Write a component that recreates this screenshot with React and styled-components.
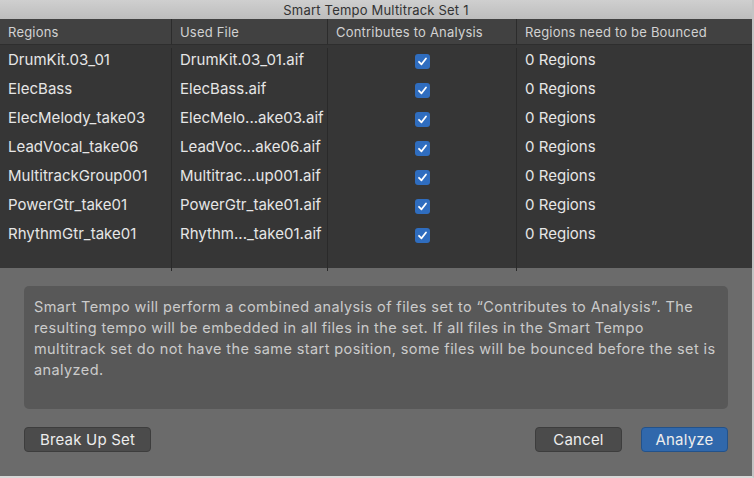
import React from 'react';
import styled, { createGlobalStyle } from 'styled-components';

const GlobalStyle = createGlobalStyle`
  html, body {
    margin: 0;
    padding: 0;
    background: #6b6b6b;
  }
  * {
    box-sizing: border-box;
  }
`;

const Window = styled.div`
  width: 754px;
  height: 478px;
  display: flex;
  flex-direction: column;
  font-family: Inter, "Noto Sans", sans-serif;
  background: #6b6b6b;
  border-right: 2px solid #c4c4c4;
  border-bottom: 2px solid #d8d8d8;
  overflow: hidden;
`;

const TitleBar = styled.div`
  height: 19px;
  flex: none;
  display: flex;
  align-items: center;
  justify-content: center;
  background: linear-gradient(#cfcfcf, #bdbdbd);
  color: #333;
  font-size: 13px;
  letter-spacing: 0.2px;
`;

const Table = styled.div`
  display: grid;
  grid-template-columns: 171px 156px 189px 1fr;
  grid-auto-rows: 29px;
  background: #363636;
  height: 249px;
  flex: none;
  align-content: start;
`;

const HeadCell = styled.div`
  height: 26px;
  display: flex;
  align-items: center;
  padding-left: 8px;
  background: #414141;
  color: #d2d2d2;
  font-size: 13px;
  letter-spacing: 0.2px;
  border-bottom: 1px solid #2e2e2e;
  border-left: ${p => (p.$first ? 'none' : '1px solid #2c2c2c')};
`;

const Cell = styled.div`
  display: flex;
  align-items: center;
  padding-left: 8px;
  color: #e6e6e6;
  font-size: 15px;
  letter-spacing: 0.02px;
  white-space: nowrap;
  border-left: ${p => (p.$first ? 'none' : '1px solid #2a2a2a')};
  justify-content: ${p => (p.$center ? 'center' : 'flex-start')};
  padding-left: ${p => (p.$center ? '0' : '8px')};
  padding-bottom: 6px;
`;

const Filler = styled.div`
  height: 20px;
  border-left: ${p => (p.$first ? 'none' : '1px solid #2a2a2a')};
`;

const Box = styled.span`
  width: 15px;
  height: 15px;
  border-radius: 3px;
  background: #2f6dbf;
  display: inline-flex;
  align-items: center;
  justify-content: center;
  margin-top: 3px;
`;

const Panel = styled.div`
  flex: 1;
  padding: 18px 24px 0 24px;
  display: flex;
  flex-direction: column;
`;

const Message = styled.div`
  height: 123px;
  background: #585858;
  border-radius: 5px;
  padding: 10px 10px;
  color: #cbcbcb;
  font-size: 14.5px;
  letter-spacing: 0.4px;
  line-height: 21px;
`;

const Line = styled.span`
  display: block;
  white-space: nowrap;
`;

const Buttons = styled.div`
  display: flex;
  align-items: center;
  gap: 19px;
  margin-top: 18px;
`;

const Spacer = styled.div`
  flex: 1;
`;

const Button = styled.button`
  height: 25px;
  width: ${p => p.$w}px;
  border-radius: 4px;
  border: 1px solid ${p => (p.$primary ? '#23528a' : '#3d3d3d')};
  background: ${p => (p.$primary ? '#3068ac' : '#4b4b4b')};
  color: #ededed;
  font-family: inherit;
  font-size: 15px;
  letter-spacing: 0.2px;
  padding: 0;
  display: flex;
  align-items: center;
  justify-content: center;
`;

const rows = [
  ['DrumKit.03_01', 'DrumKit.03_01.aif'],
  ['ElecBass', 'ElecBass.aif'],
  ['ElecMelody_take03', 'ElecMelo...ake03.aif'],
  ['LeadVocal_take06', 'LeadVoc...ake06.aif'],
  ['MultitrackGroup001', 'Multitrac...up001.aif'],
  ['PowerGtr_take01', 'PowerGtr_take01.aif'],
  ['RhythmGtr_take01', 'Rhythm..._take01.aif'],
];

const message = [
  'Smart Tempo will perform a combined analysis of files set to “Contributes to Analysis”. The',
  'resulting tempo will be embedded in all files in the set. If all files in the Smart Tempo',
  'multitrack set do not have the same start position, some files will be bounced before the set is',
  'analyzed.',
];

const Check = () => (
  <Box>
    <svg width="11" height="11" viewBox="0 0 11 11">
      <path d="M2 5.8 L4.5 8.3 L9 2.5" fill="none" stroke="#fff" strokeWidth="1.8" strokeLinecap="round" strokeLinejoin="round" />
    </svg>
  </Box>
);

export default function App() {
  return (
    <>
      <GlobalStyle />
      <Window>
        <TitleBar>Smart Tempo Multitrack Set 1</TitleBar>
        <Table>
          <HeadCell $first>Regions</HeadCell>
          <HeadCell>Used File</HeadCell>
          <HeadCell>Contributes to Analysis</HeadCell>
          <HeadCell>Regions need to be Bounced</HeadCell>
          {rows.map(([region, file]) => (
            <React.Fragment key={region}>
              <Cell $first>{region}</Cell>
              <Cell>{file}</Cell>
              <Cell $center><Check /></Cell>
              <Cell>0 Regions</Cell>
            </React.Fragment>
          ))}
          <Filler $first />
          <Filler />
          <Filler />
          <Filler />
        </Table>
        <Panel>
          <Message>
            {message.map(l => (
              <Line key={l}>{l}</Line>
            ))}
          </Message>
          <Buttons>
            <Button $w={127}>Break Up Set</Button>
            <Spacer />
            <Button $w={87}>Cancel</Button>
            <Button $w={87} $primary>Analyze</Button>
          </Buttons>
        </Panel>
      </Window>
    </>
  );
}
